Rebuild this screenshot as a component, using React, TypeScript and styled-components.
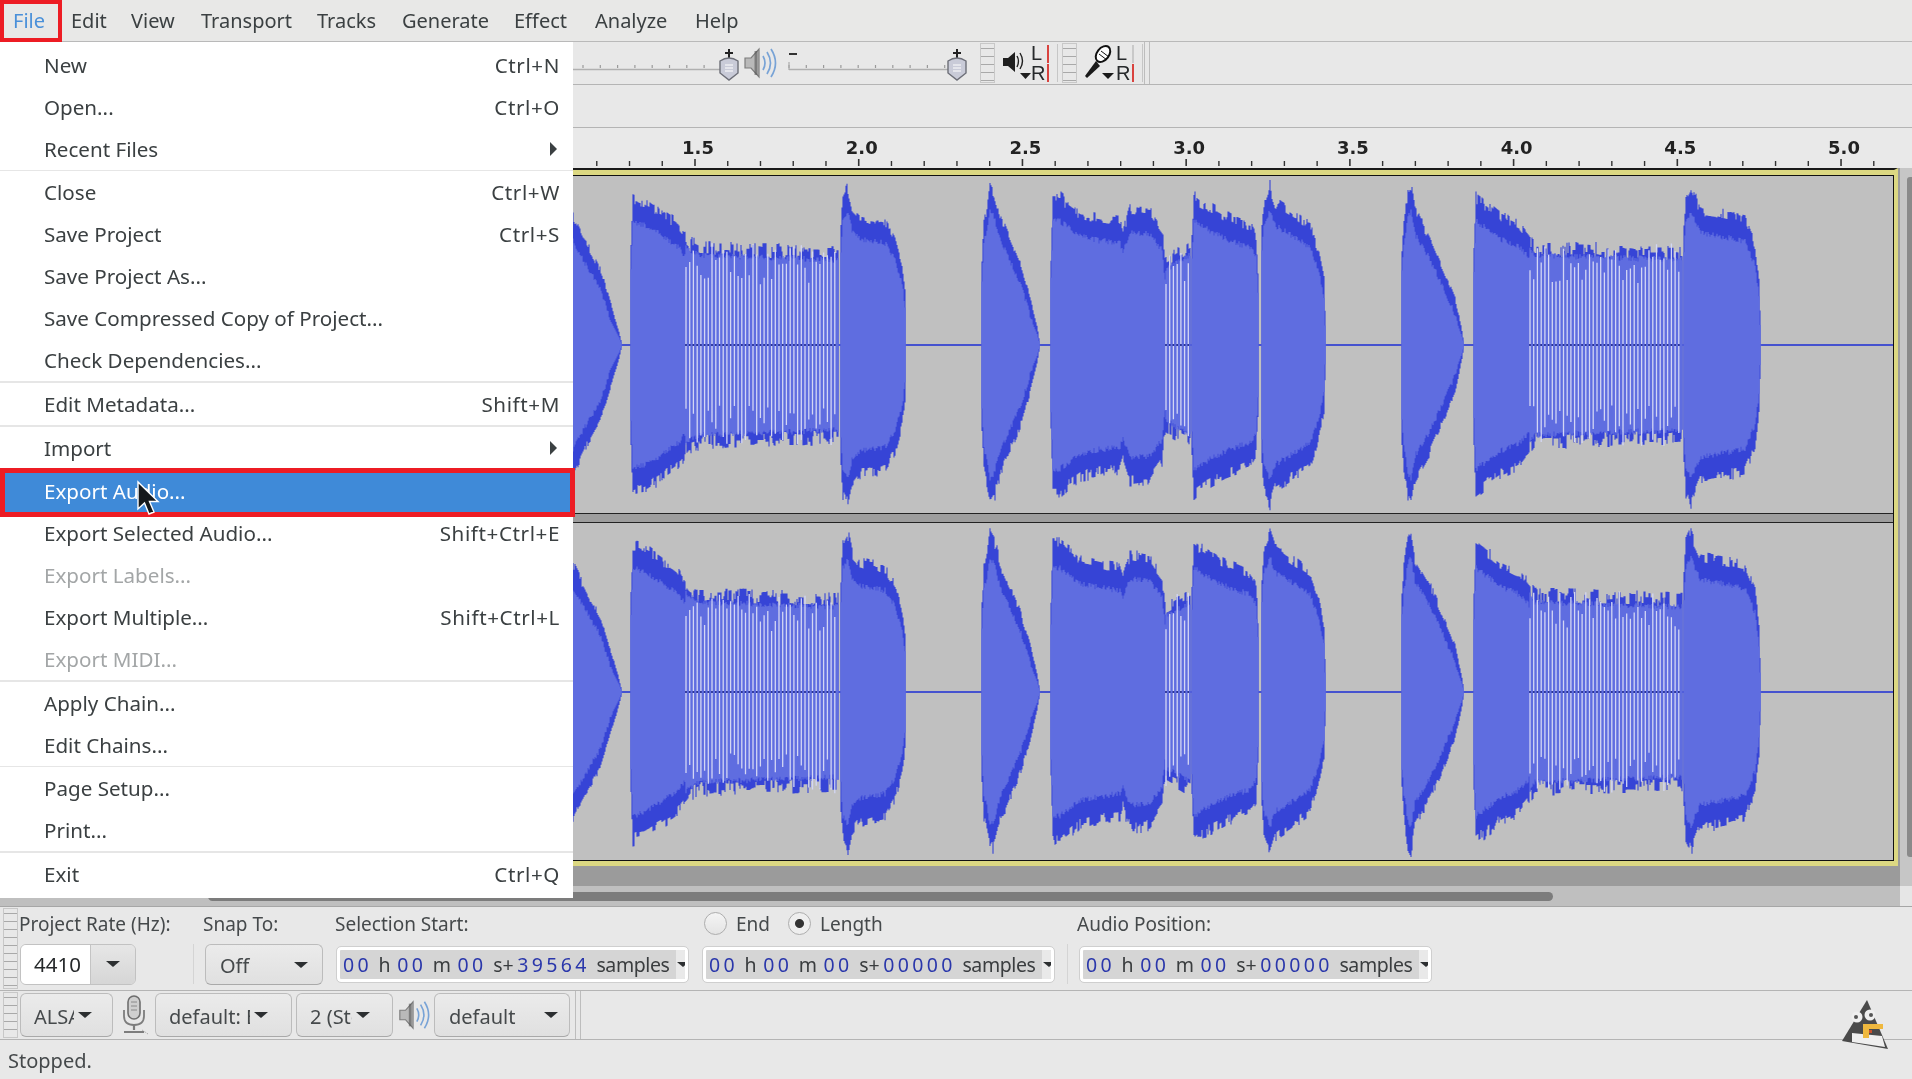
import React, { useMemo } from "react";
import styled, { createGlobalStyle } from "styled-components";

const Global = createGlobalStyle`
  html, body { margin: 0; padding: 0; background: #e8e8e8; }
  #root { width: 1912px; height: 1079px; overflow: hidden; }
`;

const Page = styled.div`
  position: relative;
  width: 1912px;
  height: 1079px;
  overflow: hidden;
  display: flex;
  flex-direction: column;
  background: #e8e8e8;
  color: #3b4042;
  font-family: "Noto Sans", "Open Sans", sans-serif;
  font-size: 20px;
  filter: blur(0.4px);
`;

const MenuBar = styled.div`
  height: 41px;
  flex: none;
  display: flex;
  align-items: center;
  background: #e8e8e7;
  border-bottom: 1px solid #b9b9b9;
`;
const MenuTitle = styled.div<{ $open?: boolean; $w: number }>`
  width: ${(p) => p.$w}px;
  padding-left: 13px;
  box-sizing: border-box;
  flex: none;
  color: ${(p) => (p.$open ? "#4a90d9" : "#3b4042")};
`;

const ToolRow = styled.div`
  height: 42px;
  flex: none;
  display: flex;
  align-items: stretch;
  padding-left: 573px;
  border-bottom: 1px solid #b4b4b4;
  background: #e8e8e8;
`;

const RulerStrip = styled.div`
  height: 40px;
  flex: none;
  background: #e9e9e9;
`;

const TrackArea = styled.div`
  height: 718px;
  flex: none;
  display: flex;
  background: #9b9b9b;
`;
const TrackColumn = styled.div`
  width: 1898px;
  flex: none;
`;
const Clip = styled.div`
  border-top: 2px solid #1a1a1a;
  border-bottom: 5px solid #dcd882;
  border-right: 4px solid #dcd882;
  background: #dcd882;
  padding-top: 5px;
`;
const ClipInner = styled.div`
  border-top: 1px solid #111;
  border-bottom: 1px solid #111;
  border-right: 1px solid #111;
  display: flex;
  flex-direction: column;
  background: #9b9b9b;
`;
const Channel = styled.svg`
  display: block;
  width: 1893px;
  height: 337px;
  background: #c0c0c0;
`;
const ChannelGap = styled.div`
  height: 8px;
  border-top: 1px solid #222;
  border-bottom: 1px solid #222;
  background: #9d9d9d;
`;
const VScroll = styled.div`
  flex: 1;
  margin-left: 2px;
  background: #c6c6c6;
  display: flex;
  justify-content: flex-end;
`;
const VThumb = styled.div`
  width: 5px;
  height: 680px;
  margin-top: 9px;
  background: #8a8a8a;
  border-radius: 3px 0 0 3px;
`;

const HScroll = styled.div`
  height: 20px;
  flex: none;
  display: flex;
  align-items: center;
  background: #bfbfbf;
  border-bottom: 1px solid #a6a6a6;
`;
const HThumb = styled.div`
  margin-left: 208px;
  width: 1345px;
  height: 9px;
  background: #7c7c7c;
  border-radius: 5px;
`;
const HCorner = styled.div`
  margin-left: auto;
  width: 12px;
  height: 100%;
  background: #e6e6e6;
`;

const SelectionBar = styled.div`
  height: 83px;
  flex: none;
  display: flex;
  border-bottom: 1px solid #b4b4b4;
`;
const Col = styled.div<{ $w: number; $ml?: number }>`
  width: ${(p) => p.$w}px;
  margin-left: ${(p) => p.$ml ?? 0}px;
  flex: none;
  display: grid;
  grid-template-columns: minmax(0, 1fr);
  grid-template-rows: 33px 49px;
  align-items: center;
`;
const Label = styled.div<{ $indent?: number }>`
  font-size: 19px;
  white-space: nowrap;
  margin-left: ${(p) => p.$indent ?? 0}px;
  color: #45494b;
`;
const Grip = styled.div<{ $ml?: number; $mr?: number; $my?: number }>`
  width: 13px;
  flex: none;
  margin: ${(p) => p.$my ?? 1}px ${(p) => p.$mr ?? 0}px ${(p) => p.$my ?? 1}px ${(p) => p.$ml ?? 3}px;
  border: 1px solid #c8c8c8;
  background: repeating-linear-gradient(to bottom, #e8e8e8 0 4px, #a9a9a9 4px 5px, #e8e8e8 5px 8px);
`;
const Combo = styled.div`
  height: 41px;
  display: flex;
  margin-top: -1px;
  border-radius: 6px;
  border: 1px solid #c2c2c2;
  overflow: hidden;
  box-sizing: border-box;
`;
const ComboEntry = styled.div`
  width: 69px;
  background: #fff;
  color: #26292b;
  display: flex;
  align-items: center;
  padding-left: 13px;
  box-sizing: border-box;
  font-size: 20.5px;
`;
const ComboArrow = styled.div`
  flex: 1;
  background: linear-gradient(#e6e6e6, #d6d6d6);
  border-left: 1px solid #c4c4c4;
  display: flex;
  align-items: center;
  justify-content: center;
`;
const Caret = styled.span<{ $size?: number }>`
  display: inline-block;
  flex: none;
  width: 0;
  height: 0;
  border-left: ${(p) => p.$size ?? 7}px solid transparent;
  border-right: ${(p) => p.$size ?? 7}px solid transparent;
  border-top: ${(p) => (p.$size ?? 7) - 1}px solid #2c2f31;
`;
const VLine = styled.div<{ $ml: number; $mr: number }>`
  width: 1px;
  flex: none;
  margin: 37px ${(p) => p.$mr}px 6px ${(p) => p.$ml}px;
  background: #d4d4d4;
`;
const PushButton = styled.div<{ $w: number; $pl: number; $ml?: number; $h?: number }>`
  width: ${(p) => p.$w}px;
  height: ${(p) => p.$h ?? 41}px;
  margin-left: ${(p) => p.$ml ?? 0}px;
  flex: none;
  box-sizing: border-box;
  padding-left: ${(p) => p.$pl}px;
  display: flex;
  align-items: center;
  background: linear-gradient(#ebebeb, #e0e0e0);
  border: 1px solid #bcbcbc;
  border-bottom-color: #a9a9a9;
  border-radius: 6px;
  color: #45494b;
`;
const Clipped = styled.span<{ $w: number }>`
  width: ${(p) => p.$w}px;
  flex: none;
  overflow: hidden;
  white-space: nowrap;
  margin-right: 4px;
  padding-top: 2px;
`;
const TimeField = styled.div`
  width: 351px;
  height: 35px;
  box-sizing: border-box;
  border: 3px solid #fff;
  outline: 1px solid #cfcfcf;
  border-radius: 4px;
  background: #d5d5d5;
  display: flex;
  align-items: center;
  gap: 6.5px;
  padding-left: 3px;
  font-size: 19.5px;
  color: #3a3d3f;
  overflow: hidden;
  white-space: nowrap;
`;
const Num = styled.span`
  color: #2a37ab;
  letter-spacing: 3.4px;
`;
const SPlus = styled.span`
  margin-right: -3px;
`;
const Samples = styled.span`
  width: 73px;
  flex: none;
  letter-spacing: -0.4px;
`;
const TimeDrop = styled.div`
  margin-left: auto;
  width: 14px;
  height: 100%;
  flex: none;
  background: #e9e9e9;
  display: flex;
  align-items: center;
  justify-content: center;
`;
const RadioRow = styled.div`
  display: flex;
  align-items: center;
  padding-left: 1px;
  font-size: 19px;
  color: #45494b;
`;
const Radio = styled.span<{ $on?: boolean; $ml?: number }>`
  width: 23px;
  height: 23px;
  flex: none;
  box-sizing: border-box;
  margin: 0 9px 0 ${(p) => p.$ml ?? 0}px;
  border: 1px solid #adadad;
  border-radius: 50%;
  background: ${(p) =>
    p.$on
      ? "radial-gradient(circle, #333 0 4px, #eee 5px)"
      : "linear-gradient(#f4f4f4, #e4e4e4)"};
`;

const DeviceBar = styled.div`
  height: 48px;
  flex: none;
  display: flex;
  align-items: center;
  border-bottom: 1px solid #b4b4b4;
`;
const DeviceGrip = styled(Grip)`
  align-self: stretch;
`;
const EndRule = styled.div<{ $ml: number }>`
  width: 4px;
  align-self: stretch;
  margin-left: ${(p) => p.$ml}px;
  border-left: 1px solid #bdbdbd;
  border-right: 1px solid #bdbdbd;
`;
const IconBox = styled.div<{ $w: number; $ml?: number }>`
  width: ${(p) => p.$w}px;
  margin-left: ${(p) => p.$ml ?? 0}px;
  flex: none;
  display: flex;
  align-items: center;
  justify-content: center;
`;
const StatusBar = styled.div`
  height: 39px;
  flex: none;
  box-sizing: border-box;
  display: flex;
  align-items: center;
  padding: 2px 0 0 8px;
  font-size: 20px;
  color: #45494b;
`;

const Menu = styled.div`
  position: absolute;
  left: 0;
  top: 42px;
  width: 573px;
  height: 856px;
  padding-top: 2px;
  box-sizing: border-box;
  background: #fff;
  font-size: 20.6px;
`;
const MenuRow = styled.div<{ $disabled?: boolean; $active?: boolean; $tall?: boolean }>`
  height: ${(p) => (p.$tall ? 43 : 42)}px;
  box-sizing: border-box;
  padding: 0 13px ${(p) => (p.$tall ? 1 : 0)}px 44px;
  display: flex;
  align-items: center;
  justify-content: space-between;
  white-space: nowrap;
  color: ${(p) => (p.$active ? "#fff" : p.$disabled ? "#a3a6a7" : "#3b4042")};
  background: ${(p) => (p.$active ? "#3f8ad8" : "transparent")};
`;
const MenuKey = styled.span`
  letter-spacing: 0.6px;
`;
const MenuSep = styled.div<{ $h: number }>`
  height: ${(p) => p.$h}px;
  background: #e6e6e6;
`;
const SubArrow = styled.span`
  width: 0;
  height: 0;
  margin-right: 3px;
  border-top: 7px solid transparent;
  border-bottom: 7px solid transparent;
  border-left: 7px solid #3b4042;
`;
const RedBox = styled.div<{ $x: number; $y: number; $w: number; $h: number; $b: number }>`
  position: absolute;
  left: ${(p) => p.$x}px;
  top: ${(p) => p.$y}px;
  width: ${(p) => p.$w}px;
  height: ${(p) => p.$h}px;
  box-sizing: border-box;
  border: ${(p) => p.$b}px solid #ed1c24;
`;
const CursorWrap = styled.svg`
  position: absolute;
  left: 135px;
  top: 479px;
`;
const LogoWrap = styled.svg`
  position: absolute;
  left: 1842px;
  top: 1000px;
`;

const MeterBlock = styled.div<{ $w: number }>`
  width: ${(p) => p.$w}px;
  flex: none;
  display: flex;
  align-items: center;
`;
const MeterLetters = styled.div<{ $ml: number }>`
  display: flex;
  flex-direction: column;
  font-family: "Liberation Sans", sans-serif;
  font-size: 20px;
  line-height: 20px;
  color: #26292b;
  margin-left: ${(p) => p.$ml}px;
  width: 16px;
`;
const MeterBars = styled.div`
  width: 10px;
  align-self: stretch;
  margin: 2px 0;
  border-right: 1px solid #c6c6c6;
  display: flex;
  flex-direction: column;
  justify-content: space-between;
`;
const MeterBar = styled.span<{ $red?: boolean }>`
  display: block;
  width: 2px;
  height: 18px;
  margin-top: 1px;
  background: ${(p) => (p.$red ? "#d9433f" : "#c9c9c9")};
`;

/* ---------- wave ---------- */
type Env = [number, number][];
const solid: Env[] = [
  [[560, 140], [573, 133], [585, 108], [600, 80], [611, 42], [619, 14], [622, 1]],
  [[631, 100], [633, 155], [645, 150], [660, 140], [676, 128], [690, 110], [700, 105], [838, 100]],
  [[841, 120], [843, 155], [848, 165], [852, 145], [860, 135], [885, 130], [895, 112], [902, 85], [905, 60], [906, 1]],
  [[982, 90], [984, 130], [988, 150], [990, 167], [994, 160], [1000, 135], [1010, 110], [1020, 85], [1030, 50], [1037, 20], [1040, 1]],
  [[1051, 90], [1053, 155], [1060, 155], [1080, 138], [1100, 133], [1120, 130], [1123, 120], [1130, 143], [1150, 140], [1162, 122], [1164, 100]],
  [[1165, 90], [1190, 105]],
  [[1192, 110], [1194, 155], [1200, 150], [1225, 135], [1250, 125], [1256, 115], [1258, 75]],
  [[1262, 120], [1264, 150], [1270, 167], [1275, 150], [1290, 140], [1310, 125], [1318, 100], [1324, 70], [1326, 1]],
  [[1402, 100], [1404, 130], [1408, 160], [1411, 166], [1415, 140], [1430, 112], [1445, 75], [1455, 50], [1462, 15], [1464, 1]],
  [[1474, 100], [1476, 155], [1482, 150], [1500, 135], [1520, 125], [1530, 112], [1535, 105], [1682, 100]],
  [[1684, 120], [1686, 155], [1691, 166], [1700, 142], [1720, 138], [1745, 132], [1755, 105], [1759, 70], [1761, 1]],
];
const combs: [number, number][] = [[686, 838], [1166, 1190], [1530, 1682]];

function rng(seed: number) {
  let s = seed;
  return () => {
    s = (s + 0x6d2b79f5) | 0;
    let t = Math.imul(s ^ (s >>> 15), 1 | s);
    t = (t + Math.imul(t ^ (t >>> 7), 61 | t)) ^ t;
    return ((t ^ (t >>> 14)) >>> 0) / 4294967296;
  };
}
function envAt(e: Env, x: number) {
  for (let i = 1; i < e.length; i++) {
    if (x <= e[i][0]) {
      const [x0, a0] = e[i - 1];
      const [x1, a1] = e[i];
      return a0 + ((a1 - a0) * (x - x0)) / (x1 - x0);
    }
  }
  return 0;
}
function buildWave(seed: number) {
  const r = rng(seed);
  const mid = 169;
  let peak = "";
  let body = "";
  let comb = "";
  let dots = "";
  const inComb = (x: number) => combs.some(([a, b]) => x >= a && x <= b);
  for (const e of solid) {
    const start = Math.max(e[0][0], 0);
    const end = e[e.length - 1][0];
    let nu = 1;
    let nd = 1;
    for (let x = start; x <= end; x++) {
      const cm = inComb(x);
      const depth = cm ? 0.16 : 0.09;
      if (r() > 0.45) nu = 1 - depth + depth * r();
      if (r() > 0.45) nd = 1 - depth + depth * r();
      const a = envAt(e, x);
      peak += `M${x} ${(mid - a * nu).toFixed(1)}V${(mid + a * nd).toFixed(1)}`;
      const band = cm ? 12 + 6 * r() : 11 + 0.11 * a + 6 * r();
      const b = Math.max(a * 0.55, a - band);
      body += `M${x} ${(mid - b).toFixed(1)}V${(mid + b).toFixed(1)}`;
    }
  }
  for (const [a, b] of combs) {
    for (let x = a; x <= b; x += 3.72) {
      const top = 60 + r() * 42;
      const bot = 60 + r() * 42;
      comb += `M${x.toFixed(1)} ${(mid - top).toFixed(1)}V${(mid - 1).toFixed(1)}M${x.toFixed(1)} ${(mid + 1).toFixed(1)}V${(mid + bot).toFixed(1)}`;
      dots += `M${x.toFixed(1)} ${mid - 1}V${mid + 1}`;
    }
  }
  return { peak, body, comb, dots };
}

function Wave({ seed }: { seed: number }) {
  const w = useMemo(() => buildWave(seed), [seed]);
  return (
    <Channel viewBox="0 0 1893 337">
      <line x1="0" x2="1893" y1="169" y2="169" stroke="#4552cf" strokeWidth="2" />
      <path d={w.peak} stroke="#3644d6" strokeWidth="1.1" fill="none" />
      <path d={w.body} stroke="#5f6de0" strokeWidth="1.25" fill="none" />
      <path d={w.comb} stroke="#d3d6f4" strokeWidth="1.3" fill="none" />
      <path d={w.dots} stroke="#2b3490" strokeWidth="1.6" fill="none" />
    </Channel>
  );
}

function Ruler() {
  const major = [1.5, 2.0, 2.5, 3.0, 3.5, 4.0, 4.5, 5.0];
  const step = 163.72;
  const ticks: React.ReactNode[] = [];
  for (let k = -3; k < 37; k++) {
    const x = 695 + (k * step) / 5;
    const isMajor = k % 5 === 0;
    ticks.push(
      <line key={k} x1={x} x2={x} y1={isMajor ? 31 : 33} y2={38} stroke="#333" strokeWidth={isMajor ? 1.6 : 1.4} />
    );
  }
  return (
    <RulerStrip>
      <svg width="1912" height="40" style={{ display: "block" }}>
        {ticks}
        {major.map((m, i) => (
          <text key={m} x={698 + i * step} y={26} textAnchor="middle" fontFamily="'DejaVu Sans', sans-serif" fontWeight="700" fontSize="18" fill="#222">
            {m.toFixed(1)}
          </text>
        ))}
      </svg>
    </RulerStrip>
  );
}

function Slider({ width, head, from, minus }: { width: number; head: number; from: number; minus?: boolean }) {
  const dots: React.ReactNode[] = [];
  for (let x = from; x < head - 10; x += 17.3) {
    dots.push(<line key={x} x1={x} x2={x} y1={23} y2={26} stroke="#9a9a9a" strokeWidth="1.2" />);
  }
  return (
    <svg width={width} height="42" style={{ flex: "none", display: "block" }}>
      <line x1={from - (minus ? 0 : 10)} x2={head} y1="27.5" y2="27.5" stroke="#b0b0b0" strokeWidth="1.4" />
      {dots}
      {minus && <line x1={from} x2={from + 8} y1="12" y2="12" stroke="#333" strokeWidth="2" />}
      {minus && <line x1={from} x2={from} y1="20" y2="28" stroke="#aaa" strokeWidth="1.2" />}
      <line x1={head - 3} x2={head + 5} y1="11" y2="11" stroke="#222" strokeWidth="2" />
      <line x1={head + 1} x2={head + 1} y1="7" y2="16" stroke="#222" strokeWidth="2" />
      <path d={`M${head - 8} 19 Q${head + 1} 13 ${head + 10} 19 V31 L${head + 1} 38 L${head - 8} 31 Z`} fill="#c9cbd8" stroke="#6d6f78" strokeWidth="1.4" />
      <path d={`M${head - 3} 23h8M${head - 3} 26h8M${head - 3} 29h8`} stroke="#fff" strokeWidth="1" />
    </svg>
  );
}

function SpeakerGray({ size = 36 }: { size?: number }) {
  return (
    <svg width={size} height={size} viewBox="0 0 36 36">
      <path d="M3 13h6l8-9v28l-8-9H3z" fill="#b9b9b9" stroke="#7c7c7c" strokeWidth="1.2" />
      <path d="M14 6v24" stroke="#555" strokeWidth="3" opacity=".6" />
      <path d="M21 11q4 7 0 14M25 7q7 11 0 22M29 4q9 14 0 28" fill="none" stroke="#78a3d6" strokeWidth="1.7" />
    </svg>
  );
}
function SpeakerBlack() {
  return (
    <svg width="34" height="36" viewBox="0 0 34 36">
      <path d="M1 13h5l7-6v20l-7-6H1z" fill="#1f1f1f" />
      <path d="M15 11q3 5 0 11M18 8q5 8 0 16" fill="none" stroke="#1f1f1f" strokeWidth="1.4" />
      <path d="M18 28h11l-5.5 6z" fill="#1f1f1f" />
    </svg>
  );
}
function MicBlack() {
  return (
    <svg width="36" height="38" viewBox="0 0 36 38">
      <ellipse cx="21" cy="10" rx="6" ry="9" transform="rotate(38 21 10)" fill="#fff" stroke="#111" strokeWidth="2" />
      <path d="M17 10l8 6M19 7l8 6" stroke="#111" strokeWidth="1" />
      <path d="M14 17L3 32l2 2 13-12z" fill="#1a1a1a" />
      <path d="M20 29h12l-6 6z" fill="#1a1a1a" />
    </svg>
  );
}
function MicGray() {
  return (
    <svg width="32" height="42" viewBox="0 0 32 42">
      <rect x="10" y="2" width="12" height="23" rx="6" fill="#cfcfcf" stroke="#6e6e6e" strokeWidth="1.6" />
      <path d="M13 8h6M13 12h6M13 16h6" stroke="#8a8a8a" />
      <path d="M6 16v6q0 9 10 9t10-9v-6" fill="none" stroke="#7d7d7d" strokeWidth="1.8" />
      <path d="M16 31v5M6 38h20" stroke="#7d7d7d" strokeWidth="2.2" />
      <path d="M24 36q3 2 6 4" stroke="#9a9a9a" strokeWidth="1" strokeDasharray="1 1" fill="none" />
    </svg>
  );
}

function Meter({ w, mic }: { w: number; mic?: boolean }) {
  return (
    <MeterBlock $w={w}>
      <IconBox $w={mic ? 38 : 36} $ml={mic ? 4 : 6}>
        {mic ? <MicBlack /> : <SpeakerBlack />}
      </IconBox>
      <MeterLetters $ml={mic ? -3 : -6}>
        <span>L</span>
        <span>R</span>
      </MeterLetters>
      <MeterBars>
        <MeterBar $red={!mic} />
        <MeterBar $red />
      </MeterBars>
    </MeterBlock>
  );
}

function Time({ n }: { n: string }) {
  return (
    <TimeField>
      <Num>00</Num>
      <span>h</span>
      <Num>00</Num>
      <span>m</span>
      <Num>00</Num>
      <SPlus>s+</SPlus>
      <Num>{n}</Num>
      <Samples>samples</Samples>
      <TimeDrop>
        <Caret $size={6} />
      </TimeDrop>
    </TimeField>
  );
}

type MenuItem =
  | { label: string; key?: string; arrow?: boolean; disabled?: boolean; active?: boolean; tall?: boolean }
  | number;
const menu: MenuItem[] = [
  { label: "New", key: "Ctrl+N" },
  { label: "Open...", key: "Ctrl+O" },
  { label: "Recent Files", arrow: true },
  1,
  { label: "Close", key: "Ctrl+W" },
  { label: "Save Project", key: "Ctrl+S" },
  { label: "Save Project As..." },
  { label: "Save Compressed Copy of Project..." },
  { label: "Check Dependencies..." },
  2,
  { label: "Edit Metadata...", key: "Shift+M" },
  2,
  { label: "Import", arrow: true, tall: true },
  { label: "Export Audio...", active: true },
  { label: "Export Selected Audio...", key: "Shift+Ctrl+E" },
  { label: "Export Labels...", disabled: true },
  { label: "Export Multiple...", key: "Shift+Ctrl+L" },
  { label: "Export MIDI...", disabled: true },
  2,
  { label: "Apply Chain..." },
  { label: "Edit Chains..." },
  1,
  { label: "Page Setup..." },
  { label: "Print..." },
  2,
  { label: "Exit", key: "Ctrl+Q" },
];

const titles: [string, number][] = [
  ["File", 58], ["Edit", 60], ["View", 70], ["Transport", 116], ["Tracks", 85],
  ["Generate", 112], ["Effect", 81], ["Analyze", 100], ["Help", 80],
];

export default function App() {
  return (
    <Page>
      <Global />
      <MenuBar>
        {titles.map(([t, w], i) => (
          <MenuTitle key={t} $w={w} $open={i === 0}>{t}</MenuTitle>
        ))}
      </MenuBar>
      <ToolRow>
        <Slider width={168} head={155} from={10} />
        <IconBox $w={36} $ml={1}><SpeakerGray /></IconBox>
        <Slider width={200} head={178} from={11} minus />
        <Grip $ml={2} $mr={0} />
        <Meter w={67} />
        <Grip $ml={0} $mr={0} />
        <Meter w={66} mic />
        <EndRule $ml={1} />
      </ToolRow>
      <ToolRow />
      <Ruler />
      <TrackArea>
        <TrackColumn>
          <Clip>
            <ClipInner>
              <Wave seed={7} />
              <ChannelGap />
              <Wave seed={31} />
            </ClipInner>
          </Clip>
        </TrackColumn>
        <VScroll><VThumb /></VScroll>
      </TrackArea>
      <HScroll>
        <HThumb />
        <HCorner />
      </HScroll>
      <SelectionBar>
        <Grip />
        <Col $w={116} $ml={2}>
          <Label $indent={-1}>Project Rate (Hz):</Label>
          <Combo>
            <ComboEntry>4410</ComboEntry>
            <ComboArrow><Caret /></ComboArrow>
          </Combo>
        </Col>
        <VLine $ml={57} $mr={11} />
        <Col $w={118}>
          <Label $indent={-2}>Snap To:</Label>
          <PushButton $w={118} $pl={14}>
            <Clipped $w={70}>Off</Clipped>
            <Caret />
          </PushButton>
        </Col>
        <Col $w={351} $ml={14}>
          <Label $indent={-2}>Selection Start:</Label>
          <Time n="39564" />
        </Col>
        <Col $w={351} $ml={15}>
          <RadioRow>
            <Radio />
            End
            <Radio $on $ml={18} />
            Length
          </RadioRow>
          <Time n="00000" />
        </Col>
        <VLine $ml={13} $mr={12} />
        <Col $w={351}>
          <Label $indent={-3}>Audio Position:</Label>
          <Time n="00000" />
        </Col>
      </SelectionBar>
      <DeviceBar>
        <DeviceGrip />
        <PushButton $w={93} $pl={13} $ml={2} $h={44}>
          <Clipped $w={40}>ALSA</Clipped>
          <Caret />
        </PushButton>
        <IconBox $w={42}><MicGray /></IconBox>
        <PushButton $w={137} $pl={13} $h={44}>
          <Clipped $w={81}>default: Built-in</Clipped>
          <Caret />
        </PushButton>
        <PushButton $w={97} $pl={13} $ml={4} $h={44}>
          <Clipped $w={42}>2 (Stereo)</Clipped>
          <Caret />
        </PushButton>
        <IconBox $w={41}><SpeakerGray size={34} /></IconBox>
        <PushButton $w={136} $pl={14} $h={44}>
          <Clipped $w={91}>default</Clipped>
          <Caret />
        </PushButton>
        <EndRule $ml={5} />
      </DeviceBar>
      <StatusBar>Stopped.</StatusBar>

      <Menu>
        {menu.map((m, i) =>
          typeof m === "number" ? (
            <MenuSep key={i} $h={m} />
          ) : (
            <MenuRow key={m.label} $disabled={m.disabled} $active={m.active} $tall={m.tall}>
              <span>{m.label}</span>
              {m.key && <MenuKey>{m.key}</MenuKey>}
              {m.arrow && <SubArrow />}
            </MenuRow>
          )
        )}
      </Menu>

      <RedBox $x={0} $y={0} $w={62} $h={42} $b={4} />
      <RedBox $x={0} $y={468} $w={575} $h={49} $b={5} />

      <CursorWrap width="30" height="38" viewBox="0 0 30 38">
        <path d="M3 3v27l6.5-6 4.5 11 5-2-4.5-10.5H23z" fill="#15191c" stroke="#fff" strokeWidth="1.4" />
      </CursorWrap>

      <LogoWrap width="50" height="50" viewBox="0 0 50 50">
        <path d="M25 0L0 41l46 8z" fill="#4a4a4a" />
        <path d="M10 33l30 3 3 11-33-5z" fill="#efefef" />
        <circle cx="15" cy="17" r="5.5" fill="#efefef" />
        <circle cx="28" cy="15" r="5.5" fill="#efefef" />
        <circle cx="14" cy="17" r="2" fill="#555" />
        <circle cx="29" cy="15" r="2" fill="#555" />
        <path d="M21 24h20v5H27v9h-6z" fill="#efb83e" />
        <rect x="27" y="30" width="3" height="3" fill="#c8502c" />
      </LogoWrap>
    </Page>
  );
}
